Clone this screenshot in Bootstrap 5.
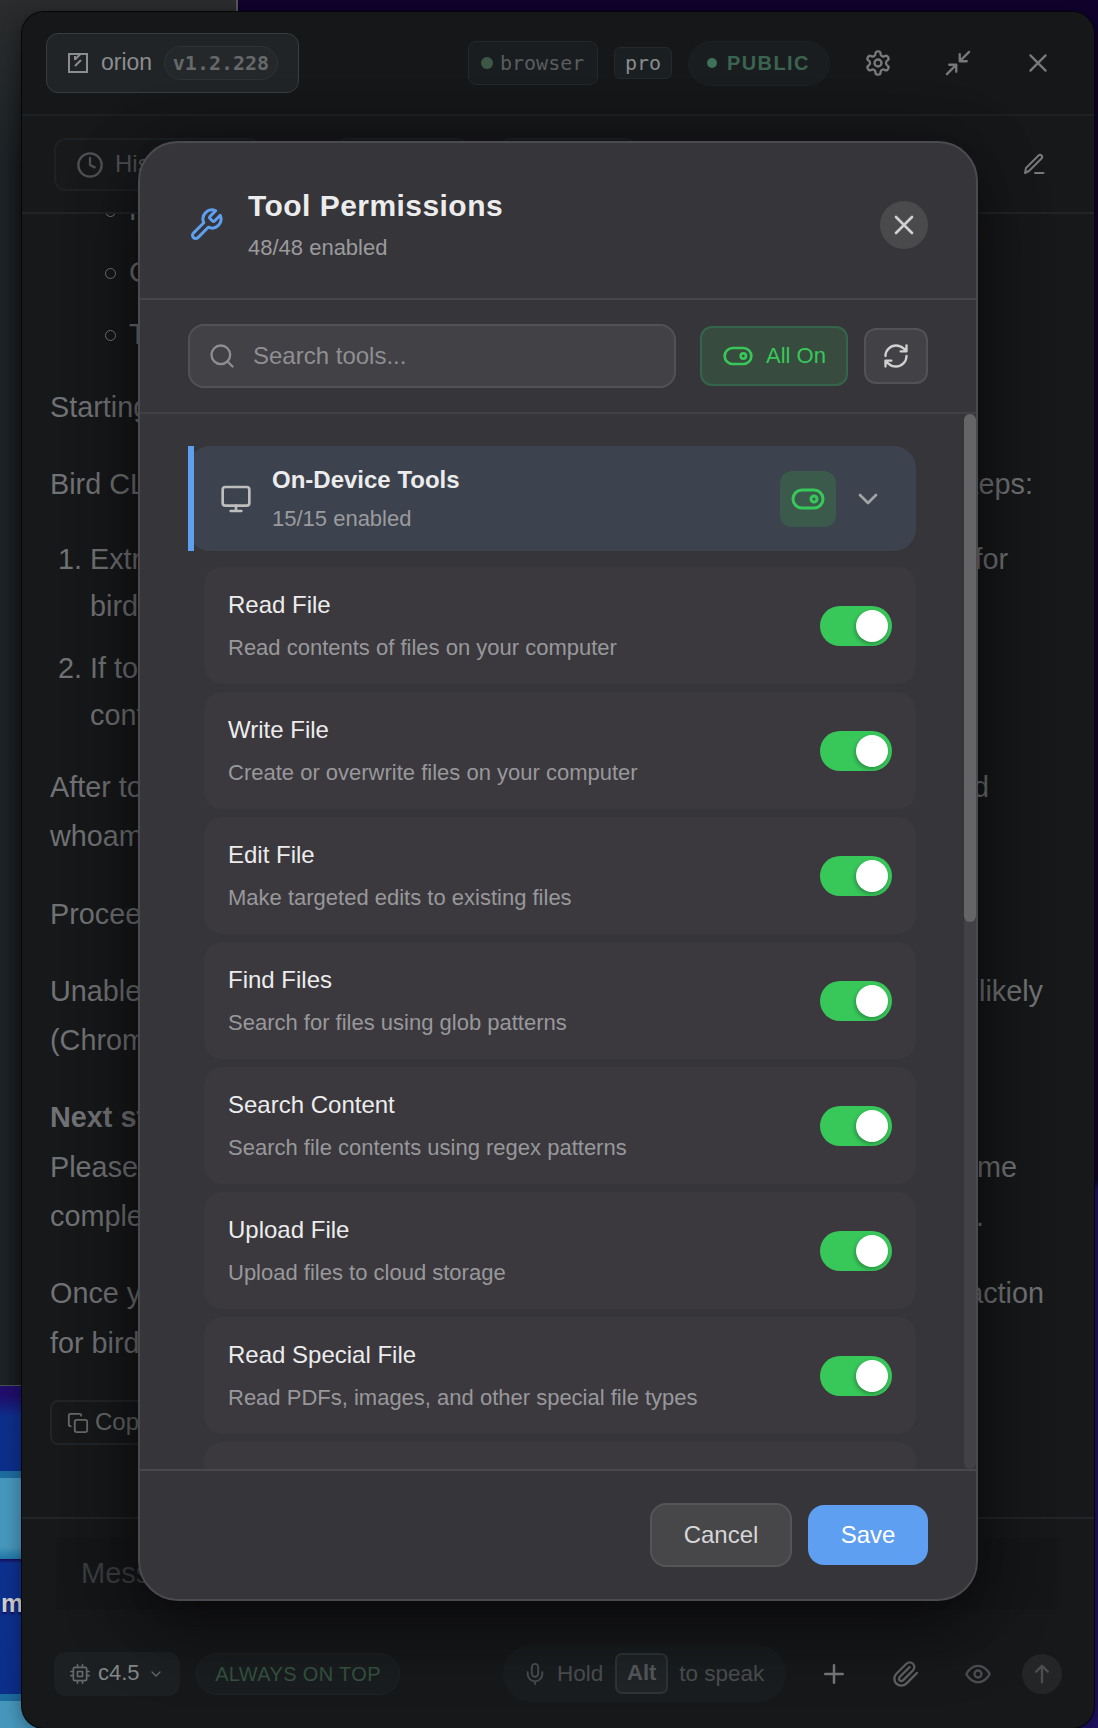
<!DOCTYPE html>
<html lang="en" data-bs-theme="dark">
<head>
<meta charset="utf-8">
<meta name="viewport" content="width=device-width, initial-scale=1">
<title>Tool Permissions</title>
<link href="https://cdn.jsdelivr.net/npm/bootstrap@5.3.0/dist/css/bootstrap.min.css" rel="stylesheet">
<style>
  body { margin: 0; font-family: "Liberation Sans", Arial, sans-serif; background: #10022c; font-size: 22px; line-height: 1.2; }
  svg { fill: none; stroke: currentColor; stroke-width: 2; stroke-linecap: round; stroke-linejoin: round; flex: none; display: block; }
  .mono-text { font-family: "DejaVu Sans Mono", monospace; font-size: 20px; }
  .desktop { width: 1098px; height: 1728px; background: linear-gradient(#10022c 0 1180px, #1e1064 1190px); }

  /* windows behind the app */
  .back-window { left: 0; top: 0; width: 238px; height: 1386px; border-right: 2px solid #555658; border-bottom: 1px solid #4d4e50; background: linear-gradient(90deg, #1d2427, #15191b 22px, #242628 60px); }
  .back-window::before { content: ""; position: absolute; inset: 0 0 auto 0; height: 170px; background: linear-gradient(#2a2c2d, rgba(42,44,45,0)); }
  .wallpaper { left: 0; top: 1387px; width: 60px; height: 341px; background: linear-gradient(#200d6c 0, #200d6c 8px, #0d2f8c 30px, #0c2f8c 84px, #1c6d9f 84px, #1c6d9f 91px, #4797bd 91px, #4797bd 160px, #1f78a6 172px, #1a0a5c 172px, #0d318f 176px, #0c2f8c 307px, #1c6d9f 307px, #1c6d9f 314px, #4797bd 314px); }
  .desk-label { left: 1px; top: 1588px; font-weight: 700; font-size: 25px; color: #d0d0d0; text-shadow: 0 2px 2px #180a50; }

  .app-window { left: 22px; top: 12px; width: 1072px; height: 1716px; background: #17181a; border-radius: 22px; box-shadow: 0 0 0 1px #060608, 0 4px 20px rgba(0,0,0,.4); overflow: hidden; color: #77797b; }
  .topbar { height: 104px; border-bottom: 2px solid #1e2123; padding: 0 26px 0 24px; background: #151719; }
  .brand-chip { width: 253px; height: 60px; border: 1px solid #3a3c3d; border-radius: 12px; background: #212426; padding-left: 21px; color: #8b8d8e; }
  .version-pill { width: 114px; height: 34px; border: 1px solid #2e3435; border-radius: 17px; background: #25282a; color: #66696a; font-weight: 700; }
  .chip-browser { width: 130px; height: 44px; border: 1px solid #25292b; border-radius: 8px; background: #191d20; color: #5a5d5f; margin-right: 16px; padding-left: 12px; gap: 7px; }
  .chip-pro { width: 58px; height: 32px; border: 1px solid #25292b; border-radius: 6px; background: #1a1f21; color: #8a8c8d; margin-right: 16px; }
  .chip-public { width: 142px; height: 45px; border-radius: 23px; border: 1px solid #1d2124; background: #1a1d20; color: #3b6450; font-weight: 700; font-size: 20px; letter-spacing: 1.4px; padding-left: 18px; gap: 10px; margin-right: 34px; }
  .dot { border-radius: 50%; flex: none; }
  .tabs-row { height: 98px; border-bottom: 2px solid #222426; padding: 22px 0 0 32px; }
  .tab-pill { height: 53px; border: 2px solid #1e2225; border-radius: 12px; background: #17191b; color: #4f5254; font-size: 24px; }

  .chat { height: 1303px; padding: 0 28px; overflow: hidden; font-size: 28.8px; color: #717275; }
  .chat p, .chat ul, .chat ol { margin: 0 0 27.8px; padding: 0; list-style: none; }
  .chat p { line-height: 49.4px; }
  .chat li { line-height: 47px; margin-bottom: 15px; }
  .chat li:last-child { margin-bottom: 0; }
  .chat .scrolled-list { margin: -27.5px 0 25px 55px; }
  .scrolled-list li { gap: 13px; }
  .ring { width: 11px; height: 11px; border: 1.3px solid #77797b; border-radius: 50%; flex: none; margin-top: 3px; }
  .chat .steps { margin: -1px 0 24px 8px; }
  .steps .num { width: 32px; flex: none; }
  .copy-btn { width: 140px; height: 45px; margin-top: 32px; border: 2px solid #222527; border-radius: 8px; font-size: 24px; padding-left: 15px; color: #66686a; gap: 6px; background: #16181a; }

  .composer { border-top: 2px solid #222527; height: 211px; }
  .msg-box { margin: 19px 34px 0; height: 72px; background: #151618; padding: 18px 25px; font-size: 29px; color: #3b3d3f; }
  .tool-row { padding: 0 32px; margin-top: 35px; height: 57px; }
  .model-btn { width: 126px; height: 44px; border-radius: 12px; background: #1c2022; color: #858788; padding-left: 16px; gap: 8px; }
  .top-pill { width: 204px; height: 42px; border-radius: 21px; border: 1px solid #1f2426; background: #1a1d1f; color: #35523f; font-size: 20px; letter-spacing: .35px; margin-left: 16px; }
  .hold-pill { width: 283px; height: 57px; border-radius: 28px; background: #191d1f; color: #4b4e50; margin-left: 103px; padding-left: 21px; font-size: 22.5px; }
  .alt-key { width: 53px; height: 41px; border: 2px solid #2e3436; border-radius: 7px; background: #202426; font-weight: 700; color: #55585a; margin: 0 11px 0 12px; font-size: 22px; }
  .send-btn { width: 40px; height: 40px; border-radius: 50%; background: #232527; color: #4b4e50; }

  /* permissions dialog */
  .perm-dialog { left: 138px; top: 141px; width: 840px; height: 1460px; background: #363539; border: 2px solid #4b4b4f; border-radius: 40px; box-shadow: 0 30px 70px rgba(0,0,0,.45), 0 0 60px rgba(0,0,0,.3); color: #ececed; overflow: hidden; }
  .perm-head { height: 157px; padding: 48px 48px 40px; border-bottom: 2px solid #464549; gap: 24px; }
  .perm-title { font-size: 30px; font-weight: 700; line-height: 34px; margin: 0 0 12px; letter-spacing: .45px; color: #ececed; }
  .perm-count { color: #9b9b9d; font-size: 22px; line-height: 26px; }
  .close-round { width: 48px; height: 48px; border-radius: 50%; background: #4a4a4c; color: #d0d0d2; }
  .perm-tools { height: 114px; padding: 0 48px; border-bottom: 2px solid #414044; }
  .search-field { width: 488px; height: 64px; border: 2px solid #525256; border-radius: 16px; background: #424145; color: #8f8f92; font-size: 24px; padding-left: 18px; gap: 17px; margin-right: 24px; }
  .all-on { width: 148px; height: 60px; border: 2px solid #35654b; border-radius: 12px; background: #374b3f; color: #38c85a; font-size: 22px; gap: 12px; margin-right: 16px; }
  .refresh-btn { width: 64px; height: 56px; border: 2px solid #525256; border-radius: 12px; background: #424145; color: #d0d0d1; }
  .perm-list { height: 1055px; overflow: hidden; padding: 32px 0 0 48px; }
  .perm-col { width: 728px; }
  .group-head { height: 105px; border-radius: 22px; background: #3c424e; padding: 0 32px; margin-bottom: 16px; }
  .group-head::before { content: ""; position: absolute; left: 0; top: 0; bottom: 0; width: 6px; background: #5e9ff0; }
  .group-name { font-size: 24px; font-weight: 700; line-height: 28px; margin-bottom: 12px; }
  .group-toggle { width: 56px; height: 56px; border-radius: 12px; background: #3b5a4c; color: #38c85a; margin-right: 16px; }
  .tool-item { height: 117px; margin: 0 0 8px 16px; border-radius: 18px; background: #3b393e; padding: 0 24px; }
  .tool-name { font-size: 24px; line-height: 28px; margin-bottom: 16px; }
  .tool-desc { font-size: 22px; line-height: 26px; color: #98989b; }
  .switch { width: 72px; height: 40px; border-radius: 20px; background: #38c85a; padding: 4px; }
  .knob { width: 32px; height: 32px; border-radius: 50%; background: #fff; box-shadow: -1px 2px 4px rgba(0,0,0,.3); }
  .scroll-track { right: 0; top: 0; width: 12px; height: 1055px; border-radius: 6px; background: #424145; }
  .scroll-thumb { height: 508px; border-radius: 6px; background: #656567; }
  .perm-foot { height: 130px; border-top: 2px solid #49494d; padding: 0 48px; gap: 16px; }
  .btn-cancel { width: 142px; height: 64px; border: 2px solid #555558; border-radius: 16px; background: #474749; color: #d6d6d8; font-size: 24px; }
  .btn-save { width: 120px; height: 60px; border-radius: 16px; background: #5f9ff2; color: #fff; font-size: 24px; }
</style>
<script src="https://cdn.jsdelivr.net/npm/bootstrap@5.3.0/dist/js/bootstrap.bundle.min.js"></script>
</head>
<body>
<div class="desktop position-relative overflow-hidden">
  <div class="back-window position-absolute"></div>
  <div class="wallpaper position-absolute"></div>
  <div class="desk-label position-absolute">m</div>

  <main class="app-window position-absolute d-flex flex-column">
    <header class="topbar d-flex align-items-center flex-shrink-0">
      <div class="brand-chip d-flex align-items-center">
        <svg width="20" height="20" viewBox="0 0 20 20" style="stroke-linecap:butt;stroke-linejoin:miter"><path d="M1 1h18v18H1zM12.500 1 7 6.500M13 7l-6 6M7 3v4"/></svg>
        <span class="me-auto" style="margin-left:13px;font-size:23px">orion</span>
        <span class="version-pill mono-text d-flex align-items-center justify-content-center" style="margin-right:20px">v1.2.228</span>
      </div>
      <div class="chip-browser mono-text d-flex align-items-center ms-auto"><span class="dot" style="width:12px;height:12px;background:#3d5746"></span>browser</div>
      <div class="chip-pro mono-text d-flex align-items-center justify-content-center">pro</div>
      <div class="chip-public d-flex align-items-center"><span class="dot" style="width:10px;height:10px;background:#3f7059"></span>PUBLIC</div>
      <svg width="28" height="28" viewBox="0 0 24 24"><path d="M12.22 2h-.44a2 2 0 0 0-2 2v.18a2 2 0 0 1-1 1.73l-.43.25a2 2 0 0 1-2 0l-.15-.08a2 2 0 0 0-2.73.73l-.22.38a2 2 0 0 0 .73 2.73l.15.1a2 2 0 0 1 1 1.72v.51a2 2 0 0 1-1 1.74l-.15.09a2 2 0 0 0-.73 2.73l.22.38a2 2 0 0 0 2.73.73l.15-.08a2 2 0 0 1 2 0l.43.25a2 2 0 0 1 1 1.73V20a2 2 0 0 0 2 2h.44a2 2 0 0 0 2-2v-.18a2 2 0 0 1 1-1.73l.43-.25a2 2 0 0 1 2 0l.15.08a2 2 0 0 0 2.73-.73l.22-.39a2 2 0 0 0-.73-2.73l-.15-.08a2 2 0 0 1-1-1.74v-.5a2 2 0 0 1 1-1.74l.15-.09a2 2 0 0 0 .73-2.73l-.22-.38a2 2 0 0 0-2.73-.73l-.15.08a2 2 0 0 1-2 0l-.43-.25a2 2 0 0 1-1-1.73V4a2 2 0 0 0-2-2z"/><circle cx="12" cy="12" r="3"/></svg>
      <svg width="28" height="28" viewBox="0 0 24 24" style="margin:0 52px"><path d="M4.500 13.500h6v6M19.500 10.500h-6v-6M13.500 10.500l8-8M2.500 21.500l8-8"/></svg>
      <svg width="28" height="28" viewBox="0 0 24 24" style="margin-right:16px"><path d="M18.500 5.500l-13 13M5.500 5.500l13 13"/></svg>
    </header>

    <div class="tabs-row d-flex flex-shrink-0">
      <div class="tab-pill d-flex align-items-center" style="width:207px;padding-left:20px">
        <svg width="28" height="28" viewBox="0 0 24 24"><circle cx="12" cy="12" r="10"/><path d="M12 6v6l4 2"/></svg><span style="margin-left:11px">History</span>
      </div>
      <div class="tab-pill" style="width:134px;margin-left:74px"></div>
      <div class="tab-pill" style="width:138px;margin-left:30px"></div>
      <svg class="ms-auto" width="24" height="24" viewBox="0 0 24 24" style="margin:14px 48px 0 0"><path d="M13 21h8.500M16.500 3.500a2.120 2.120 0 0 1 3 3L7 19l-4 2 1-5Z"/></svg>
    </div>

    <section class="chat flex-shrink-0">
      <ul class="scrolled-list">
        <li class="d-flex align-items-center"><span class="ring"></span>Python</li>
        <li class="d-flex align-items-center"><span class="ring"></span>CLI commands with usage examples</li>
        <li class="d-flex align-items-center"><span class="ring"></span>Tokens</li>
      </ul>
      <p>Starting</p>
      <p class="d-flex justify-content-between" style="padding-right:33px"><span>Bird CLI</span><span>steps:</span></p>
      <ol class="steps">
        <li class="d-flex"><span class="num">1.</span><span class="flex-grow-1"><span class="d-flex justify-content-between" style="padding-right:58px"><span>Extract</span><span>for</span></span><span class="d-block">bird</span></span></li>
        <li class="d-flex"><span class="num">2.</span><span>If token<br>continue</span></li>
      </ol>
      <p><span class="d-flex justify-content-between" style="padding-right:77px"><span>After token</span><span>bird</span></span>whoami</p>
      <p>Proceeding</p>
      <p><span class="d-flex justify-content-between" style="padding-right:23px"><span>Unable to</span><span>likely</span></span>(Chrome</p>
      <p><strong>Next step:</strong><span class="d-flex justify-content-between" style="padding-right:49px"><span>Please</span><span>me</span></span><span class="d-flex justify-content-between" style="padding-right:82px"><span>complete</span><span>it.</span></span></p>
      <p><span class="d-flex justify-content-between" style="padding-right:22px"><span>Once you</span><span>extraction</span></span>for bird CLI</p>
      <div class="copy-btn d-flex align-items-center"><svg width="22" height="22" viewBox="0 0 24 24"><rect x="8.500" y="8.500" width="13.500" height="13.500" rx="2"/><path d="M4 15.500a2 2 0 0 1-2-2V4a2 2 0 0 1 2-2h9.500a2 2 0 0 1 2 2"/></svg>Copy</div>
    </section>

    <footer class="composer flex-shrink-0">
      <div class="msg-box">Message</div>
      <div class="tool-row d-flex align-items-center">
        <div class="model-btn d-flex align-items-center">
          <svg width="20" height="20" viewBox="0 0 24 24" color="#66686a"><rect x="4" y="4" width="16" height="16" rx="2"/><path d="M9 9h6v6H9zM15 1v3M9 1v3M15 20v3M9 20v3M20 9h3M20 14h3M1 9h3M1 14h3"/></svg>
          <span>c4.5</span>
          <svg width="16" height="16" viewBox="0 0 24 24" color="#66686a"><path d="m6 9 6 6 6-6"/></svg>
        </div>
        <div class="top-pill d-flex align-items-center justify-content-center">ALWAYS ON TOP</div>
        <div class="hold-pill d-flex align-items-center">
          <svg width="22" height="22" viewBox="0 0 24 24" style="margin-right:11px"><rect x="8.500" y="1" width="7" height="14" rx="3.500"/><path d="M20 10v2a8 8 0 0 1-16 0v-2M12 20v3"/></svg>
          Hold <span class="alt-key d-flex align-items-center justify-content-center">Alt</span> to speak
        </div>
        <svg width="30" height="30" viewBox="0 0 24 24" style="margin-left:33px" color="#77797b"><path d="M12 5v14M5 12h14"/></svg>
        <svg width="28" height="28" viewBox="0 0 24 24" style="margin-left:43px" color="#5e6062"><path d="m21.44 11.05-9.19 9.19a6 6 0 0 1-8.49-8.49l8.57-8.57A4 4 0 1 1 18 8.84l-8.59 8.57a2 2 0 0 1-2.83-2.83l8.49-8.48"/></svg>
        <svg width="28" height="28" viewBox="0 0 24 24" style="margin-left:44px" color="#4b4e50"><path d="M2 12s3.500-7 10-7 10 7 10 7-3.500 7-10 7-10-7-10-7Z"/><circle cx="12" cy="12" r="3"/></svg>
        <div class="send-btn d-flex align-items-center justify-content-center" style="margin-left:30px"><svg width="28" height="28" viewBox="0 0 24 24"><path d="M12 19V5M7 10l5-5 5 5"/></svg></div>
      </div>
    </footer>
  </main>

  <div class="perm-dialog position-absolute d-flex flex-column" role="dialog">
    <div class="perm-head d-flex align-items-center flex-shrink-0">
      <svg width="36" height="36" viewBox="0 0 24 24" color="#5e9ff0"><path d="M14.7 6.3a1 1 0 0 0 0 1.4l1.6 1.6a1 1 0 0 0 1.400 0l3.770-3.770a6 6 0 0 1-7.940 7.940l-6.910 6.910a2.120 2.120 0 0 1-3-3l6.910-6.910a6 6 0 0 1 7.940-7.940l-3.760 3.760z"/></svg>
      <div class="me-auto">
        <h1 class="perm-title">Tool Permissions</h1>
        <div class="perm-count">48/48 enabled</div>
      </div>
      <div class="close-round d-flex align-items-center justify-content-center"><svg width="32" height="32" viewBox="0 0 24 24"><path d="M18 6 6 18M6 6l12 12"/></svg></div>
    </div>

    <div class="perm-tools d-flex align-items-center flex-shrink-0">
      <div class="search-field d-flex align-items-center">
        <svg width="28" height="28" viewBox="0 0 24 24"><circle cx="11" cy="11" r="8"/><path d="m21 21-4.300-4.300"/></svg>Search tools...
      </div>
      <div class="all-on d-flex align-items-center justify-content-center"><svg width="32" height="32" viewBox="0 0 24 24"><rect x="2" y="6" width="20" height="12" rx="6"/><circle cx="16" cy="12" r="2"/></svg>All On</div>
      <div class="refresh-btn d-flex align-items-center justify-content-center"><svg width="28" height="28" viewBox="0 0 24 24"><path d="M3 12a9 9 0 0 1 9-9 9.750 9.750 0 0 1 6.740 2.740L21 8M21 3v5h-5M21 12a9 9 0 0 1-9 9 9.750 9.750 0 0 1-6.740-2.740L3 16M8 16H3v5"/></svg></div>
    </div>

    <div class="perm-list position-relative flex-shrink-0">
      <div class="perm-col">
        <div class="group-head position-relative d-flex align-items-center">
          <svg width="32" height="32" viewBox="0 0 24 24" color="#bdbdbb" style="margin-right:20px"><rect x="2" y="3" width="20" height="14" rx="2"/><path d="M8 21h8M12 17v4"/></svg>
          <div class="me-auto">
            <div class="group-name">On-Device Tools</div>
            <div class="perm-count">15/15 enabled</div>
          </div>
          <div class="group-toggle d-flex align-items-center justify-content-center"><svg width="36" height="36" viewBox="0 0 24 24"><rect x="2" y="6" width="20" height="12" rx="6"/><circle cx="16" cy="12" r="2"/></svg></div>
          <svg width="32" height="32" viewBox="0 0 24 24" color="#a3a4a4"><path d="m6 9 6 6 6-6"/></svg>
        </div>
        <div class="tool-item d-flex align-items-center justify-content-between"><div><div class="tool-name">Read File</div><div class="tool-desc">Read contents of files on your computer</div></div><div class="switch d-flex justify-content-end"><div class="knob"></div></div></div>
        <div class="tool-item d-flex align-items-center justify-content-between"><div><div class="tool-name">Write File</div><div class="tool-desc">Create or overwrite files on your computer</div></div><div class="switch d-flex justify-content-end"><div class="knob"></div></div></div>
        <div class="tool-item d-flex align-items-center justify-content-between"><div><div class="tool-name">Edit File</div><div class="tool-desc">Make targeted edits to existing files</div></div><div class="switch d-flex justify-content-end"><div class="knob"></div></div></div>
        <div class="tool-item d-flex align-items-center justify-content-between"><div><div class="tool-name">Find Files</div><div class="tool-desc">Search for files using glob patterns</div></div><div class="switch d-flex justify-content-end"><div class="knob"></div></div></div>
        <div class="tool-item d-flex align-items-center justify-content-between"><div><div class="tool-name">Search Content</div><div class="tool-desc">Search file contents using regex patterns</div></div><div class="switch d-flex justify-content-end"><div class="knob"></div></div></div>
        <div class="tool-item d-flex align-items-center justify-content-between"><div><div class="tool-name">Upload File</div><div class="tool-desc">Upload files to cloud storage</div></div><div class="switch d-flex justify-content-end"><div class="knob"></div></div></div>
        <div class="tool-item d-flex align-items-center justify-content-between"><div><div class="tool-name">Read Special File</div><div class="tool-desc">Read PDFs, images, and other special file types</div></div><div class="switch d-flex justify-content-end"><div class="knob"></div></div></div>
        <div class="tool-item"></div>
      </div>
      <div class="scroll-track position-absolute"><div class="scroll-thumb"></div></div>
    </div>

    <div class="perm-foot d-flex align-items-center justify-content-end flex-shrink-0">
      <div class="btn-cancel d-flex align-items-center justify-content-center">Cancel</div>
      <div class="btn-save d-flex align-items-center justify-content-center">Save</div>
    </div>
  </div>
</div>
</body>
</html>
